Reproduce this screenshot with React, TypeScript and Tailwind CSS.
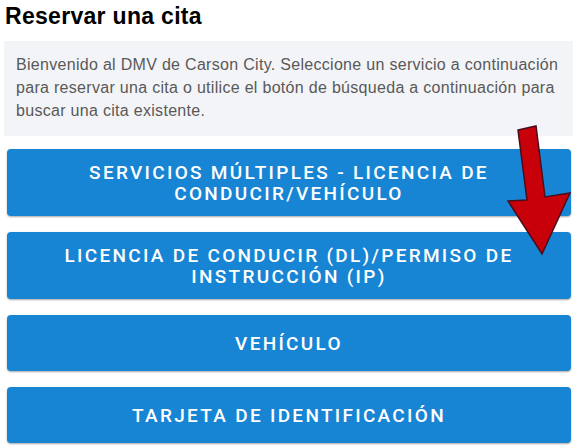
const services = [
  "Servicios múltiples - Licencia de conducir/vehículo",
  "Licencia de conducir (DL)/permiso de instrucción (IP)",
  "Vehículo",
  "Tarjeta de identificación",
];

function RedArrow() {
  return (
    <svg
      className="absolute left-0 top-0 pointer-events-none"
      width="577"
      height="448"
      viewBox="0 0 577 448"
    >
      <polygon
        points="518,130 536,126 545,197 570,193 542,254 508,201 527,200"
        fill="#c8000a"
        stroke="#4a0d1c"
        strokeWidth="1.5"
        strokeLinejoin="miter"
      />
    </svg>
  );
}

export default function App() {
  return (
    <div className="relative w-[577px] h-[448px] overflow-hidden bg-white font-['Liberation_Sans',Arial,sans-serif]">
      <h1 className="px-[5px] pt-[2px] text-[23px] font-bold leading-[28px] tracking-[0.3px] text-black">
        Reservar una cita
      </h1>
      <div className="mt-[11px] mx-[4px] w-[569px] bg-[#f3f4f7] px-[12px] pt-[12px] pb-[14px] text-[16px] leading-[23px] tracking-[0.3px] text-[#595959]">
        Bienvenido al DMV de Carson City. Seleccione un servicio a continuación
        para reservar una cita o utilice el botón de búsqueda a continuación para
        buscar una cita existente.
      </div>
      <div className="mt-[13px] mx-[7px] flex flex-col gap-[16px]">
        {services.map((s) => (
          <button
            key={s}
            className="min-h-[56px] w-[564px] rounded-[4px] bg-[#1785d3] px-[30px] py-[12.5px] text-center text-[19px] font-medium uppercase leading-[21px] tracking-[2.3px] text-white shadow-[0_1px_2px_rgba(0,0,0,0.35)] font-['Roboto',Arial,sans-serif]"
          >
            {s}
          </button>
        ))}
      </div>
      <RedArrow />
    </div>
  );
}
